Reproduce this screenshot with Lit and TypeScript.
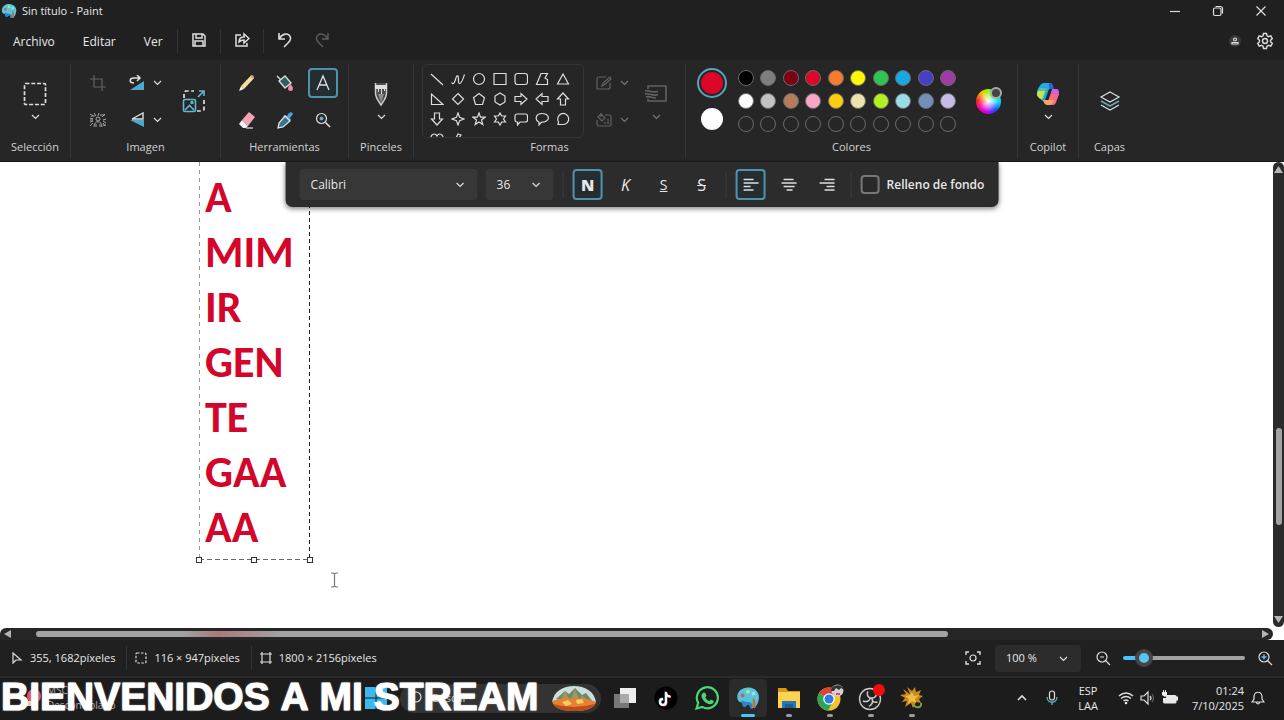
import { LitElement, html, svg, css, TemplateResult } from "lit";
import { customElement, state } from "lit/decorators.js";
import { styleMap } from "lit/directives/style-map.js";

const glyph = (size: number, body: unknown, box = size) => html`
  <svg class="glyph" width=${size} height=${size} viewBox="0 0 ${box} ${box}" aria-hidden="true">${body}</svg>`;

const chevron = (size = 9) => glyph(size, svg`<path d="M1 3l3.500 3.500L8 3"/>`, 9);

const SHAPES: TemplateResult[] = [
  svg`<path d="M1 2l12 11"/>`,
  svg`<path d="M.5 10.500C2 13 3.500 11 4.300 8S6 3 7 4s-.5 7 1.500 7.500S12 7 13.500 2.500"/>`,
  svg`<circle cx="7" cy="7" r="5.500"/>`,
  svg`<path d="M1 1.500h12v11H1z"/>`,
  svg`<rect x="1" y="1.500" width="12.500" height="11" rx="2.500"/>`,
  svg`<path d="M6 1.500h6.500L10 6l2.500 1.500v5H1.500z"/>`,
  svg`<path d="M7 2l5.500 10h-11z"/>`,
  svg`<path d="M1.500 2v10.500H13z"/>`,
  svg`<path d="M7 1.500L12.500 7 7 12.500 1.500 7z"/>`,
  svg`<path d="M7 1.500l5.500 4.200-2 6.800h-7l-2-6.800z"/>`,
  svg`<path d="M7 1l5 3v6l-5 3-5-3V4z"/>`,
  svg`<path d="M1 4.500h6V1.500L13 7l-6 5.500v-3H1z"/>`,
  svg`<path d="M13 4.500H7V1.500L1 7l6 5.500v-3h6z"/>`,
  svg`<path d="M4.500 13V7H1.500L7 1l5.500 6h-3v6z"/>`,
  svg`<path d="M4.500 1v6H1.500L7 13l5.500-6h-3V1z"/>`,
  svg`<path d="M7 1l1.600 4.400L13 7 8.600 8.600 7 13 5.400 8.600 1 7l4.400-1.600z"/>`,
  svg`<path d="M7 1l1.500 4.200H13L9.500 8l1.300 4.500L7 9.900l-3.800 2.600L4.500 8 1 5.200h4.500z"/>`,
  svg`<path d="M7 1l1.700 3H12.500L10.500 7l2 3H8.700L7 13l-1.700-3H1.500l2-3-2-3h3.800z"/>`,
  svg`<path d="M3 2h8.500a2 2 0 012 2v4a2 2 0 01-2 2H6l-2.500 3V10H3a2 2 0 01-2-2V4a2 2 0 012-2z"/>`,
  svg`<path d="M4 13v-2.800C-1 7.500 1 1.500 7 1.500s8.500 5 4 7.700c-1.300.8-3 1-4.500 1z"/>`,
  svg`<path d="M2 12.500l.6-2.500A5.500 5.500 0 117 12.500z"/>`,
  svg`<path d="M7 13C2 9 1 7 1 5s4-5 6-1c2-4 6-1 6 1s-1 4-6 8z"/>`,
  svg`<path d="M7 2L4 8h3l-2 5 6-7H8l2-3z"/>`,
];

const PALETTE = [
  ["Negro", "#000000"], ["Gris", "#7f7f7f"], ["Rojo oscuro", "#7d0016"], ["Rojo", "#dc0628"], ["Naranja", "#f77c2c"],
  ["Amarillo", "#fff700"], ["Verde", "#2fc34f"], ["Turquesa", "#18a8e5"], ["Índigo", "#473fc8"], ["Púrpura", "#a03aa4"],
  ["Blanco", "#ffffff"], ["Gris claro", "#c3c3c3"], ["Marrón", "#b67a5c"], ["Rosa", "#f9a5c6"], ["Oro", "#fccb12"],
  ["Crema", "#ebe2ad"], ["Lima", "#b4ef22"], ["Celeste", "#99dce8"], ["Gris azulado", "#7190bd"], ["Lavanda", "#c7bce8"],
];

const ALIGN: [string, string][] = [
  ["Alinear a la izquierda", "M1 3.500h10M1 7h15M1 10.500h7M1 14h10"],
  ["Centrar", "M3 3.500h10M1 7h15M3 10.500h11M6 14h6"],
  ["Alinear a la derecha", "M6 3.500h10M1 7h15M8 10.500h8M6 14h10"],
];

const ICON = {
  paint: (size: number) => glyph(size, svg`
    <path fill="#58c4dc" d="M1.500 13C0 6 6 1 13 1.500c7 .5 11.500 6 9.500 13-1 5-4 8-7 8-2 0-1-4-3-4s-2 3-5 2c-1.500-1 0-3.500-2-4-1.600-.4-3.400-.9-4-3.500z"/>
    <path fill="#2a86c8" d="M5 15c2-1 4 1 6 1s4 0 5 2 1 3-.5 4.500c-2 0-1-4-3-4s-2 3-5 2c-1.500-1 0-3.500-2.500-5.500z"/>
    <circle cx="6.500" cy="9.500" r="2" fill="#d65a5f"/><circle cx="12" cy="5.500" r="2" fill="#a8e6a0"/>
    <circle cx="17.500" cy="7.500" r="2" fill="#8ee4e0"/><path fill="#b6774c" d="M17.500 11l2 4v7h-3v-7z"/>`, 24),
  select: glyph(24, svg`<rect x="1.500" y="1.500" width="21" height="21" rx="1" stroke-dasharray="4 1.800" stroke-width="1.700"/>`),
  crop: glyph(16, svg`<path class="dim" d="M4 0v12h12M0 4h12v12"/>`),
  rotate: glyph(16, svg`<path fill="#4ba9cf" d="M15 6v9H1z"/><path stroke-width="1.600" d="M5 8C0 8 0 3 5 3h5M8 0l3 3-3 3"/>`),
  flip: glyph(16, svg`<path fill="#4ba9cf" d="M15 8v7L1 8z"/><path stroke-width="1.400" d="M14 1v6H3z"/>`),
  removeBg: glyph(18, svg`<path class="mid" d="M1 3l3 2M5 2l2 3M10 2L9 5M16 3l-3 3M1 7l3 1M1 11l3-1M1 15l3-3M17 8l-3 1M17 12l-3-2M16 15l-2-3M2 5h4M11 4h5M1 9h3M14 14h3"/>
    <circle class="mid" cx="9" cy="8" r="2"/><path class="mid" d="M5 16c0-7 8-7 8 0M7 16v-3M11 16v-3"/>`),
  resize: glyph(24, svg`<path stroke-width="1.700" stroke-dasharray="4 2.500" d="M2 9V4a2 2 0 012-2h8M22 11v9a2 2 0 01-2 2h-5"/>
    <g stroke="#64b7d3" stroke-width="1.600"><rect x="1.500" y="10.500" width="12" height="12" rx="1.500"/><path d="M3 21l4.500-4.500L12 21M16 8l6-6M17 2h5v5"/><circle cx="10" cy="13.500" r="1"/></g>`),
  pencil: glyph(18, svg`<path fill="#f3dfa0" d="M3 12L13 1.500l3 2.700L6 15z"/><path fill="#f8f3e6" d="M1 17l2-5 3 3z"/><path fill="#d8a46c" d="M12 2.500l1.500-1.500q2.500 0 2.500 3l-1.200 1.300z"/>`),
  bucket: glyph(18, svg`<path fill="#315e61" stroke-width="1.300" d="M3 7l6-5 6 7-6 5z"/><path d="M1 2l4 4"/><path fill="#f08ca6" d="M14.500 10c3 3 3.500 7 0 7s-3-4 0-7z"/>`),
  eraser: glyph(18, svg`<path fill="#f4a3b3" d="M4 9l7-8 6 5-7 9z"/><path fill="#f4f0f1" d="M4 9l6 6-2 2H5l-4-4z"/><path d="M8 17h7"/>`),
  dropper: glyph(18, svg`<path fill="#46a5db" d="M9 4l2 1 2-3q3-2 4 1l-3 4 1 2-2 1-6-5z"/><path stroke-width="1.300" fill="#34748e" d="M9 5l5 5-7 6-5 1 1-5z"/>`),
  magnify: glyph(16, svg`<circle cx="6.500" cy="6.500" r="5"/><path stroke-width="1.600" d="M10.500 10.500L15 15"/><circle cx="6.500" cy="6.500" r="2" fill="#72a9ba"/>`),
  text: glyph(18, svg`<path stroke-width="1.300" d="M3 16L9 2l6 14M5 11h8"/>`),
  brush: glyph(24, svg`<path fill="#4c4c4c" stroke="#ccc" stroke-width="1.500" d="M6.500 1v10c0 5 3 8 5.500 12 2.500-4 5.500-7 5.500-12V1"/><path fill="#ddd" d="M6 3h12v4h-2v2h-1V7h-2v5h-1V7h-2v3H9V7H6z"/><path fill="#8d8d8d" d="M9 12h6l-3 9z"/>`),
  outline: glyph(16, svg`<path class="dim" d="M14 8v4a2 2 0 01-2 2H1V4a2 2 0 012-2h7M6 11l1-3 7-6 1 2-7 6z"/>`),
  fill: glyph(16, svg`<path class="dim" d="M9 3h4a2 2 0 012 2v7a2 2 0 01-2 2H3a2 2 0 01-2-2V8M2 5l3-3 4 4-3 3zM5 1v4M12 7v5M9 10v2"/>`),
  stroke: glyph(24, svg`<path class="dim" stroke-width="1.600" d="M4 7V4h18v15H4v-2M1 9c4-1.500 6 2 13 .5M1 12c4-1.500 7 2.500 13 .8M2 15c4-1.500 6 1.500 10 1"/>`),
  copilot: glyph(24, svg`
    <path fill="#23a7e8" d="M7 1h7c2 0 2 2 1 4l-4 11-2 3c-2 1-4-1-5-3L1 12C0 9 4 2 7 1z"/>
    <path fill="#4dc5a0" d="M4 6h7L7 17c-3 1-5-2-6-5 0-2 1-4 3-6z"/>
    <path fill="#cfe04d" d="M2 9h7l-3 8c-3 0-5-3-5-5z"/>
    <path fill="#2668cf" d="M13 1c4 0 4 2 5 6h-3c-2 0-2-1-2-3z"/>
    <path fill="#cf61dd" d="M16 7h4c3 0 3 2 3 5l-3 8c-1 3-3 3-5 3h-4z"/>
    <path fill="#f16b83" d="M15 12h8l-3 8c-1 3-3 3-5 3h-5z"/>
    <path fill="#f9a45f" d="M7 18h11c-1 4-3 5-6 5-4 0-4-3-5-5z"/>
    <path fill="#262626" d="M13 7h3l-4 11H9z"/>`),
  layers: glyph(22, svg`<path d="M11 2l9 5-9 5-9-5z"/><path stroke="#67a4bd" stroke-width="1.600" d="M2 11l9 5 9-5"/><path d="M2 15l9 5 9-5"/>`),
};

@customElement("app-root")
export class AppRoot extends LitElement {
  @state() private zoom = 12;

  static styles = css`
    :host {
      display: flex; flex-direction: column; position: relative; height: 100vh; overflow: hidden;
      background: #202020; color: #e8e8e8;
      font: 11px/16px "Open Sans", "Noto Sans", sans-serif;
    }
    * { box-sizing: border-box; }
    button, select, input, textarea { font: inherit; color: inherit; margin: 0; }
    button { display: inline-flex; align-items: center; justify-content: center; padding: 0; border: 0; background: none; }
    .glyph { display: block; flex: none; fill: none; stroke: #dedede; stroke-width: 1.200; }
    .glyph [fill]:not([stroke-width]) { stroke: none; }
    .glyph .dim { stroke: #626262; }
    .glyph .mid { stroke: #a5a5a5; stroke-width: 1; }
    .grow { flex: 1; }

    .title { display: flex; align-items: center; height: 22px; padding-left: 1px; gap: 5px; flex: none; }
    .title h1 { flex: 1; margin: 0; font-size: 11px; font-weight: 400; }
    .title button { width: 43px; height: 20px; }
    .window { display: flex; padding-right: 2px; }

    .menu { display: flex; align-items: center; height: 38px; flex: none; font-size: 12px; }
    .menu .words { display: flex; gap: 28px; padding: 2px 14px 0 13px; }
    .menu .cell { width: 43px; height: 24px; padding-bottom: 2px; border-left: 1px solid #333; }
    .menu .plain { width: 32px; height: 24px; padding-bottom: 2px; border: 0; }
    .account { display: flex; padding-right: 4px; }
    .account button { width: 30px; height: 24px; }
    .avatar { width: 12px; height: 12px; border-radius: 50%; background: #393939; display: grid; place-items: center; }

    .ribbon { display: flex; height: 102px; padding: 4px 0 3px; flex: none; background: #262626; border-bottom: 1px solid #181818; }
    .group { display: flex; flex-direction: column; border-right: 1px solid #363636; color: #d2d2d2; }
    .group:last-child { border: 0; }
    .group h2 { margin: 0; font-size: 11px; font-weight: 400; text-align: center; line-height: 18px; }
    .body { display: flex; align-items: center; justify-content: center; height: 74px; }
    .stack { display: flex; flex-direction: column; align-items: center; gap: 6px; }
    .w-select { width: 71px; } .w-image { width: 150px; } .w-tools { width: 128px; }
    .w-brush { width: 65px; } .w-shapes { width: 272px; } .w-colors { width: 332px; }
    .w-copilot { width: 61px; } .w-layers { width: 61px; }
    .image-body { justify-content: flex-start; padding-left: 7px; gap: 5px; }
    .image-grid { display: grid; grid-template: 37px 37px / 40px 54px; align-items: center; justify-items: center; }
    .pair { display: flex; gap: 8px; }
    .image-grid + button { width: 34px; height: 34px; }
    .tool-grid { display: grid; grid-template: 37px 37px / repeat(3, 38px); place-items: center; }
    .tool-grid button { width: 30px; height: 30px; }
    .picked { border: 2px solid #4c94ae; border-radius: 4px; background: #262d30; }

    .shape-box { display: grid; grid-template-columns: repeat(7, 21px); grid-auto-rows: 20px; width: 162px; height: 74px;
      padding: 4px 0 0 3px; overflow: hidden; border: 1px solid #353535; border-radius: 5px; }
    .shapes-body { justify-content: flex-start; padding-left: 8px; gap: 12px; }
    .shape-opts { display: grid; grid-template-rows: 37px 37px; align-items: center; margin-right: 3px; }
    .shapes-body .shape-opts .glyph, .shapes-body .stack .glyph { stroke: #777; }

    .colors-body { justify-content: flex-start; padding-left: 11px; gap: 7px; }
    .current { display: flex; flex-direction: column; align-items: center; gap: 10px; padding-bottom: 4px; }
    .ink { width: 30px; height: 30px; border: 2px solid #57a5bd; border-radius: 50%; padding: 2px; background: #dc0628 content-box; }
    .paper { width: 22px; height: 22px; border-radius: 50%; background: #fff; }
    .swatches { display: grid; grid-template: repeat(3, 23px) / repeat(5, 23px 22px); place-items: center; }
    .swatch { width: 16px; height: 16px; border: 1px solid #6a6a6a; border-radius: 50%; }
    .wheel { position: relative; width: 25px; height: 25px; margin-left: 10px; border-radius: 50%;
      background: radial-gradient(circle, #fff 0, #fff0 60%), conic-gradient(#8f0, #0f6 40deg, #0df 90deg, #24f 140deg, #b0f 185deg, #f0a 230deg, #f22 275deg, #fb0 320deg, #8f0); }
    .wheel span { position: absolute; right: -1px; top: -2px; width: 12px; height: 12px; border: 2px solid #aaa; border-radius: 50%; background: #444; }

    .workspace { position: relative; flex: 1; min-height: 0; display: grid; grid-template: minmax(0, 1fr) 12px / minmax(0, 1fr) 11px; background: #fff; }
    .canvas { position: relative; overflow: hidden; }
    .textbox { position: absolute; left: 199px; top: 0; width: 111px; height: 398px;
      background:
        repeating-linear-gradient(#999 0 4px, #fff0 4px 8px) left / 1px 100% no-repeat,
        repeating-linear-gradient(#222 0 4px, #fff0 4px 7px) right / 1px 100% no-repeat,
        repeating-linear-gradient(90deg, #666 0 5px, #fff0 5px 8px) bottom / 100% 1px no-repeat; }
    .textbox textarea { display: block; width: 100%; height: 100%; padding: 8px 0 0 6px; border: 0; outline: 0; resize: none; overflow: hidden;
      background: none; color: #d3052a; font: 700 44px/55px Carlito, Calibri, "Open Sans", sans-serif; white-space: pre; }
    .handle { position: absolute; bottom: -3px; width: 6px; height: 6px; border: 1px solid #333; background: #fff; }
    .h-l { left: -3px; } .h-m { left: 52px; } .h-r { right: -3px; }
    .caret { position: absolute; left: 330px; top: 410px; }

    .format { position: absolute; z-index: 2; left: 50%; top: 0; transform: translateX(-50%); display: flex; align-items: center; gap: 8px;
      height: 45px; padding: 0 14px; border-radius: 0 0 7px 7px; background: #2c2c2c; box-shadow: 0 2px 5px #0007; font-size: 12px; white-space: nowrap; }
    .pick { position: relative; display: flex; align-items: center; }
    .pick select { appearance: none; width: 100%; height: 31px; padding: 0 11px; border: 0; border-radius: 4px; background: #373737; }
    .pick .glyph { position: absolute; right: 13px; pointer-events: none; }
    .font { width: 178px; } .size { width: 68px; }
    .rule { width: 1px; height: 27px; margin: 0 1px; background: #3d3d3d; }
    .format button { width: 30px; height: 31px; font-size: 16px; }
    .bold { font-weight: 800; } .italic { font-style: italic; } .under { text-decoration: underline; } .strike { text-decoration: line-through; }
    .format button.under { font-size: 14px; }
    .format label { display: flex; align-items: center; gap: 7px; font-weight: 600; }
    .format input { appearance: none; width: 19px; height: 19px; border: 2px solid #777; border-radius: 4px; background: #292929; }

    .vbar { display: flex; flex-direction: column; align-items: center; margin-bottom: 1px; padding: 3px 0; border-radius: 6px; background: #2a2a2a; }
    .vbar .thumb { width: 6px; height: 97px; margin-bottom: 91px; border-radius: 3px; background: #a3a3a3; }
    .hbar { display: flex; align-items: center; padding: 0 3px; border-radius: 6px 6px 6px 0; background: #262626; }
    .hbar .thumb { width: 72%; height: 6px; margin-left: 24px; border-radius: 3px;
      background: linear-gradient(90deg, #a3a3a3 16%, #a87a7a 20%, #a3a3a3 27%); }
    .arrow { fill: #b5b5b5; stroke: none; }

    .status { display: flex; align-items: center; height: 36px; padding: 0 11px; flex: none; background: #202020; }
    .fact { display: flex; align-items: center; gap: 7px; height: 24px; }
    .fact + .fact { margin-left: 11px; padding-left: 8px; border-left: 1px solid #333; }
    .status .zoom { width: 86px; margin: 0 14px; }
    .status .zoom select { height: 27px; background: #2c2c2c; }
    .slider { appearance: none; width: 122px; height: 18px; margin: 0 12px; background: none; }
    .slider::-webkit-slider-runnable-track { height: 4px; border-radius: 2px; background: linear-gradient(90deg, #4cc2ff 12%, #a2a2a2 12%); }
    .slider::-webkit-slider-thumb { appearance: none; width: 18px; height: 18px; margin-top: -7px; border: 4px solid #454545; border-radius: 50%; background: #5bc4f5; }

    .taskbar { position: relative; display: flex; align-items: center; height: 44px; padding: 0 19px 2px 0; flex: none; background: #1c1c1c; border-top: 2px solid #2b2b2b; }
    .widget { display: flex; align-items: center; gap: 5px; width: 355px; padding-left: 24px; font-size: 10px; line-height: 15px; color: #aaa; }
    .search { display: flex; align-items: center; gap: 10px; width: 201px; height: 29px; padding: 0 4px 0 8px; margin-left: 4px; border-radius: 15px; background: #333; }
    .search input { flex: 1; min-width: 0; border: 0; background: none; padding: 0; }
    .search input::placeholder { color: #ccc; }
    .start { width: 41px; height: 38px; }
    .apps { display: flex; gap: 3px; margin-left: 5px; }
    .app { position: relative; width: 38px; height: 38px; border-radius: 4px; }
    .active { background: #2b2b2b; }
    .running::after { content: ""; position: absolute; bottom: 0; left: 16px; width: 6px; height: 3px; border-radius: 2px; background: #9b9b9b; }
    .active::after { left: 12px; width: 14px; background: #4cc2ff; }
    .tray { display: flex; align-items: center; white-space: nowrap; line-height: 15px; text-align: center; }
    .tray .chev { margin-right: 16px; }
    .lang { margin: 0 20px 0 18px; }
    .quick { display: flex; align-items: center; gap: 6px; margin-right: 14px; }
    .clock { text-align: right; margin-right: 7px; }
    .banner { position: absolute; z-index: 3; left: 1px; bottom: 1px; margin: 0; color: #fff; font: 700 39px/44px "Liberation Sans", Arial, sans-serif;
      font-kerning: none; white-space: nowrap; -webkit-text-stroke: 1px #fff; text-shadow: 0 0 2px #fff; pointer-events: none; }
  `;

  private group(cls: string, name: string, body: unknown, bodyClass = "") {
    return html`<section class="group ${cls}"><div class="body ${bodyClass}">${body}</div><h2>${name}</h2></section>`;
  }

  private tool(name: string, icon: unknown, cls = "") {
    return html`<button class=${cls} aria-label=${name}>${icon}</button>`;
  }

  private renderRibbon() {
    return html`<div class="ribbon">
      ${this.group("w-select", "Selección", html`<button class="stack" aria-label="Seleccionar">${ICON.select}${chevron()}</button>`)}
      ${this.group("w-image", "Imagen", html`
        <div class="image-grid">
          ${this.tool("Recortar", ICON.crop)}
          ${this.tool("Girar", html`${ICON.rotate}${chevron()}`, "pair")}
          ${this.tool("Quitar fondo", ICON.removeBg)}
          ${this.tool("Voltear", html`${ICON.flip}${chevron()}`, "pair")}
        </div>
        ${this.tool("Cambiar tamaño", ICON.resize)}`, "image-body")}
      ${this.group("w-tools", "Herramientas", html`<div class="tool-grid">
        ${this.tool("Lápiz", ICON.pencil)}${this.tool("Relleno", ICON.bucket)}${this.tool("Texto", ICON.text, "picked")}
        ${this.tool("Borrador", ICON.eraser)}${this.tool("Selector de color", ICON.dropper)}${this.tool("Lupa", ICON.magnify)}
      </div>`)}
      ${this.group("w-brush", "Pinceles", html`<button class="stack" aria-label="Pinceles">${ICON.brush}${chevron()}</button>`)}
      ${this.group("w-shapes", "Formas", html`
        <div class="shape-box">${SHAPES.map((s, i) => this.tool(`Forma ${i + 1}`, glyph(14, s)))}</div>
        <div class="shape-opts">
          ${this.tool("Contorno", html`${ICON.outline}${chevron()}`, "pair")}
          ${this.tool("Relleno de forma", html`${ICON.fill}${chevron()}`, "pair")}
        </div>
        <button class="stack" aria-label="Grosor">${ICON.stroke}${chevron()}</button>`, "shapes-body")}
      ${this.group("w-colors", "Colores", html`
        <div class="current"><button class="ink" aria-label="Color 1"></button><button class="paper" aria-label="Color 2"></button></div>
        <div class="swatches">
          ${PALETTE.map(([name, color]) => html`<button class="swatch" aria-label=${name} style=${styleMap({ background: color })}></button>`)}
          ${Array.from({ length: 10 }, (_, i) => html`<button class="swatch" aria-label="Personalizado ${i + 1}"></button>`)}
        </div>
        <button class="wheel" aria-label="Editar colores"><span></span></button>`, "colors-body")}
      ${this.group("w-copilot", "Copilot", html`<button class="stack" aria-label="Copilot">${ICON.copilot}${chevron()}</button>`)}
      ${this.group("w-layers", "Capas", this.tool("Capas", ICON.layers))}
    </div>`;
  }

  private renderFormat() {
    return html`<div class="format">
      <div class="pick font"><select aria-label="Fuente"><option>Calibri</option></select>${chevron()}</div>
      <div class="pick size"><select aria-label="Tamaño"><option>36</option></select>${chevron()}</div>
      <span class="rule"></span>
      <button class="bold picked" aria-label="Negrita">N</button>
      <button class="italic" aria-label="Cursiva">K</button>
      <button class="under" aria-label="Subrayado">S</button>
      <button class="strike" aria-label="Tachado">S</button>
      <span class="rule"></span>
      ${ALIGN.map(([name, d], i) => this.tool(name, glyph(17, svg`<path stroke-width="1.500" d=${d}/>`), i === 0 ? "picked" : ""))}
      <span class="rule"></span>
      <label><input type="checkbox">Relleno de fondo</label>
    </div>`;
  }

  private renderTaskbar() {
    return html`<footer class="taskbar">
      <div class="widget">
        ${glyph(18, svg`<circle cx="10" cy="7" r="7" fill="#d95570"/><path fill="#e8c9a6" d="M2 12h8v5H2z"/>`)}
        <div>MSC<br>Descontrolado</div>
      </div>
      <button class="start" aria-label="Inicio">${glyph(24, svg`<path fill="#39b8f2" d="M1 1h10.500v10.500H1zM12.500 1H23v10.500H12.500zM1 12.500h10.500V23H1zM12.500 12.500H23V23H12.500z"/>`)}</button>
      <label class="search">
        ${glyph(14, svg`<circle cx="8" cy="6" r="5"/><path d="M4.500 9.500L1 13"/>`)}
        <input type="search" placeholder="Buscar" aria-label="Buscar">
        <svg class="glyph" width="46" height="28" viewBox="0 0 46 28" aria-hidden="true">
          <path fill="#c9dfdf" d="M1 18C3 7 12 2 23 2s20 5 22 16z"/>
          <path fill="#6c8b62" d="M5 15l9-8 4 3 6-6 7 7 4-2 7 9z"/>
          <path fill="#a59660" d="M14 7l5 10 5-12 5 12 2-6 7 7H9z"/>
          <path fill="#e98031" d="M1 17q10-4 22-2 12-2 22 3-2 9-22 9T1 17z"/>
          <path fill="#b84e1e" d="M2 20q20 6 42 0-4 7-21 7T2 20z"/>
          <path fill="#f7cf61" d="M11 18l6-2 4 4-6 2zM25 16l6-1 2 4-7 1z"/>
        </svg>
      </label>
      <nav class="apps">
        <button class="app" aria-label="Vista de tareas">${glyph(24, svg`<path fill="#ededed" d="M7 2h16v15H7z"/><path fill="#777" d="M1 8h15v14H1z"/><path fill="#aaa" d="M7 8h9v9H7z"/>`)}</button>
        <button class="app" aria-label="TikTok">${glyph(24, svg`<circle cx="12" cy="12" r="11.500" fill="#000"/><path stroke="#25d5dc" stroke-width="2" d="M11.500 5.500v10a3 3 0 11-3-3M11.500 6c0 2.500 2 4 4.500 4"/><path stroke="#f04060" stroke-width="2" d="M12.600 6.500v10a3 3 0 11-3-3M12.600 7c0 2.500 2 4 4.500 4"/><path stroke="#fff" stroke-width="2" d="M12 6v10a3 3 0 11-3-3M12 6.500c0 2.500 2 4 4.500 4"/>`)}</button>
        <button class="app" aria-label="WhatsApp">${glyph(24, svg`<path stroke="#48d773" stroke-width="2.200" d="M1.500 22.500l1.700-5.600a10.500 10.500 0 114 4z"/><path fill="#48d773" d="M8.500 6.500l1.700.3 1.300 3-1.200 1.700q1.300 2.500 4 3.700l1.500-1.600 3 1.500c.2 2-2 3.600-4 3.200-4-.8-7.500-4.200-8.300-7.800-.3-1.700.8-3.400 2-4z"/>`)}</button>
        <button class="app running active" aria-label="Paint">${ICON.paint(24)}</button>
        <button class="app running" aria-label="Explorador de archivos">${glyph(24, svg`<path fill="#d99b16" d="M1 2h8l2 3h12v5H1z"/><path fill="#fbd252" d="M1 6h22v16H1z"/><path fill="#2577b5" d="M5 15h14v7H5z"/><path fill="#1b5c92" d="M8 18h8v4H8z"/>`)}</button>
        <button class="app running" aria-label="Chrome">${glyph(28, svg`<circle cx="13" cy="15" r="11.500" fill="#f4c430"/><path fill="#da4437" d="M13 15L3 9.300A11.500 11.500 0 0124 11H13z"/><path fill="#2aa558" d="M13 15L3 9.300A11.500 11.500 0 0012 26.500l5-9z"/><circle cx="13" cy="15" r="5.800" fill="#fff"/><circle cx="13" cy="15" r="4.500" fill="#2a7de1"/><circle cx="21.500" cy="6.500" r="6" fill="#d9cfd2"/><path fill="#333" d="M15 7c0-7 12-8 13-1l-3-2-2 2-3-2-2 3z"/><path fill="#b25d6b" d="M20 9h4v2h-4z"/>`)}</button>
        <button class="app running" aria-label="OBS Studio">${glyph(28, svg`<circle cx="13" cy="15" r="10.500" stroke="#ccc" stroke-width="1.300" fill="#222"/><path stroke="#ccc" stroke-width="1.500" d="M11 7.500c-2 3 0 6 2.500 6.500 3 .5 5-1 6-3M20.500 18c-3.500 1-6-1-5.500-4M13.500 14c-1 3-4 4.500-7.500 3M15 14.500c1.500 3 0 6-3 8"/><circle cx="22" cy="6" r="6" fill="#f20c0c"/>`)}</button>
        <button class="app running" aria-label="Juego">${glyph(24, svg`<path fill="#c98a1b" d="M10 8L7 1l5 4 3-4 1 5 5-2-2 5 4 1-4 3 2 4-5-1-3 6-2-5-6 4 2-6-5 1 3-4-5-3 6-1-3-5z"/><path fill="#eebf3a" d="M12 6l2 4 5-1-4 4 1 4-4-2-4 3 1-5-4-3 5-1z"/><path stroke="#77a640" stroke-width="2" d="M13 18c3 5 9 4 8-1"/>`)}</button>
      </nav>
      <span class="grow"></span>
      <div class="tray">
        <button class="chev" aria-label="Iconos ocultos">${glyph(12, svg`<path stroke-width="1.600" d="M2 8l4-4 4 4"/>`)}</button>
        <button aria-label="Micrófono">${glyph(16, svg`<rect x="5.500" y="1" width="5" height="9" rx="2.500"/><path stroke="#5cb8cf" stroke-width="1.300" d="M3 7c0 7 10 7 10 0M8 12v3"/>`)}</button>
        <div class="lang">ESP<br>LAA</div>
        <div class="quick">
          ${glyph(16, svg`<path stroke-width="1.500" d="M1 6q7-6 14 0M3 8.500q5-4 10 0M5.500 11q2.500-2 5 0"/><circle cx="8" cy="13" r="1.300" fill="#eee"/>`)}
          ${glyph(16, svg`<path d="M1 6h3l4-4v12l-4-4H1z"/><path d="M10 6q2 2 0 4"/><path class="dim" d="M12 4q3 4 0 8"/>`)}
          ${glyph(16, svg`<path fill="#e8e8e8" d="M4 5h9q1.500 0 1.500 1.500H16v4h-1.500V12q0 1.500-1.500 1.500H3Q1 13.500 1 12V8h3z"/><path fill="#eee" d="M1 0h1v2h1V0h1v2h1v3L3 7 0 5V2h1z"/>`)}
        </div>
        <div class="clock">01:24<br>7/10/2025</div>
        <button aria-label="Notificaciones">${glyph(14, svg`<path d="M1 11h12l-2-3V5C10 0 4 0 3 5v3zM5 11q2 4 4 0"/>`)}</button>
      </div>
      <p class="banner">BIENVENIDOS A MI STREAM</p>
    </footer>`;
  }

  render() {
    const arrow = (d: string) => html`<svg width="9" height="8" viewBox="0 0 9 8" aria-hidden="true"><path class="arrow" d=${d}/></svg>`;
    return html`
      <header class="title">
        ${ICON.paint(16)}<h1>Sin título - Paint</h1>
        <div class="window">
          ${this.tool("Minimizar", glyph(12, svg`<path d="M1 6.500h10"/>`))}
          ${this.tool("Restaurar", glyph(12, svg`<rect x="1.500" y="3" width="7.500" height="7.500" rx="1.500"/><path d="M3.500 1.500h5a2 2 0 012 2v5"/>`))}
          ${this.tool("Cerrar", glyph(12, svg`<path d="M1.500 1.500l9 9M10.500 1.500l-9 9"/>`))}
        </div>
      </header>
      <nav class="menu">
        <div class="words"><button>Archivo</button><button>Editar</button><button>Ver</button></div>
        ${this.tool("Guardar", glyph(16, svg`<path stroke-width="1.500" d="M2 2h10l2 2v10H2zM5 2v4h6V2M4 14V9h8v5"/>`), "cell")}
        ${this.tool("Compartir", glyph(16, svg`<path stroke-width="1.500" d="M7 3H2v11h11v-3M5 10c0-4 2-5 5-5V2l5 4.500L10 11V8c-3 0-4 1-5 2z"/>`), "cell")}
        ${this.tool("Deshacer", glyph(16, svg`<path stroke-width="1.600" d="M2 1v6h6M2 7c3-5 7-6 10-4 3 3 1 6-1 8l-4 4"/>`), "cell")}
        ${this.tool("Rehacer", glyph(16, svg`<path stroke="#5d5d5d" stroke-width="1.400" d="M14 1v6H8M14 7c-3-5-7-6-10-4-3 3-1 6 1 8l4 4"/>`), "plain")}
        <span class="grow"></span>
        <div class="account">
          <button aria-label="Cuenta"><span class="avatar">${glyph(8, svg`<circle cx="4" cy="2.500" r="1.500"/><path d="M1 7V5.500h6V7z"/>`)}</span></button>
          <button aria-label="Configuración">${glyph(18, svg`<path stroke-width="1.400" d="M7.500 1.500h3l.5 2.300 1.500.9 2.300-.8 1.500 2.700L14.500 8.200v1.600l1.800 1.600-1.500 2.700-2.300-.8-1.500.9-.5 2.300h-3L7 14.200l-1.500-.9-2.300.8-1.500-2.700 1.800-1.600V8.200L1.700 6.600l1.500-2.700 2.300.8L7 3.800z"/><circle cx="9" cy="9" r="2.500" stroke-width="1.400"/>`)}</button>
        </div>
      </nav>
      ${this.renderRibbon()}
      <main class="workspace">
        <div class="canvas">
          <div class="textbox">
            <textarea aria-label="Texto" spellcheck="false" .value=${"A\nMIM\nIR\nGEN\nTE\nGAA\nAA"}></textarea>
            <i class="handle h-l"></i><i class="handle h-m"></i><i class="handle h-r"></i>
          </div>
          <svg class="glyph caret" width="9" height="16" viewBox="0 0 9 16" aria-hidden="true"><path stroke="#777" d="M1 1h2l1.500 1L6 1h2M4.500 2v12M1 15h2l1.500-1L6 15h2"/></svg>
        </div>
        <div class="vbar">${arrow("M4.500 1L9 8H0z")}<span class="grow"></span><span class="thumb"></span>${arrow("M4.500 7L9 0H0z")}</div>
        <div class="hbar">${arrow("M1 4l7-4v8z")}<span class="thumb"></span><span class="grow"></span>${arrow("M8 4L1 0v8z")}</div>
        ${this.renderFormat()}
      </main>
      <div class="status">
        <div class="fact">${glyph(12, svg`<path d="M2 1v10l3-3h5z"/>`)}355, 1682píxeles</div>
        <div class="fact">${glyph(12, svg`<rect x="1" y="1" width="10" height="10" rx="1" stroke-dasharray="2.500 1.500"/>`)}116 × 947píxeles</div>
        <div class="fact">${glyph(12, svg`<path d="M2 2h8v8H2zM0 2h2V0M10 0v2h2M0 10h2v2M10 12v-2h2"/>`)}1800 × 2156píxeles</div>
        <span class="grow"></span>
        ${this.tool("Ajustar a la ventana", glyph(16, svg`<path stroke-width="1.400" d="M1 5V2h3M12 2h3v3M15 11v3h-3M4 14H1v-3"/><circle cx="8" cy="8" r="3"/>`))}
        <div class="pick zoom"><select aria-label="Zoom"><option>100 %</option></select>${chevron()}</div>
        ${this.tool("Alejar", glyph(16, svg`<circle cx="7" cy="7" r="5"/><path d="M10.500 10.500L15 15M5 7h4"/>`))}
        <input class="slider" type="range" aria-label="Nivel de zoom" min="0" max="100" .value=${String(this.zoom)}
          @input=${(e: Event) => { this.zoom = Number((e.target as HTMLInputElement).value); }}>
        ${this.tool("Acercar", glyph(16, svg`<circle cx="7" cy="7" r="5"/><path d="M10.500 10.500L15 15"/><path stroke="#62c0e2" stroke-width="1.500" d="M4.500 7h5M7 4.500v5"/>`))}
      </div>
      ${this.renderTaskbar()}`;
  }
}
